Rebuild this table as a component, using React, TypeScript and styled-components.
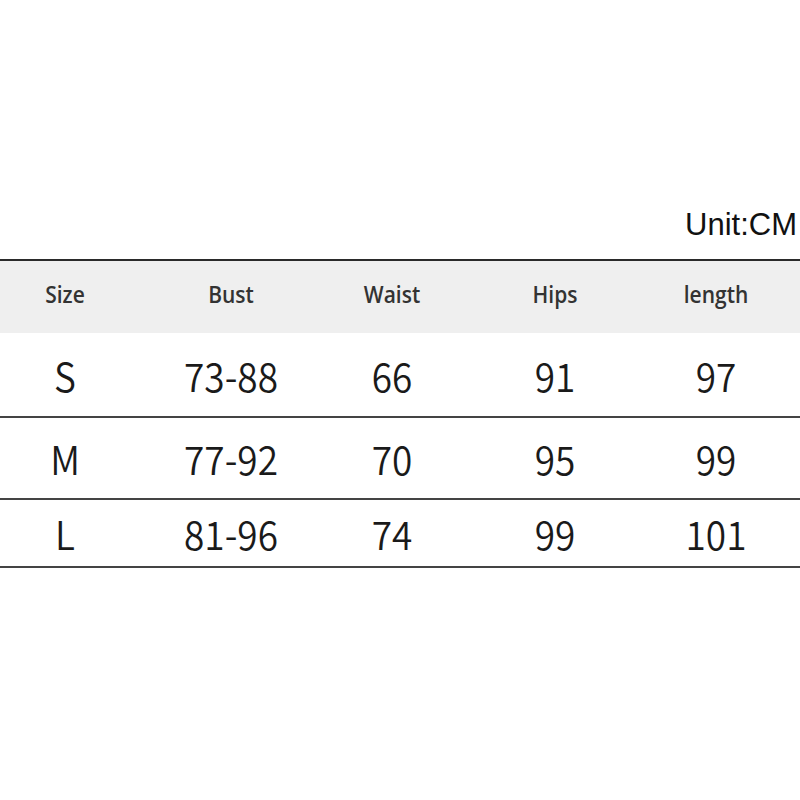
import styled, { createGlobalStyle } from 'styled-components';

type SizeRow = {
  size: string;
  bust: string;
  waist: string;
  hips: string;
  length: string;
  height: number;
};

const headers = ['Size', 'Bust', 'Waist', 'Hips', 'length'];

const rows: SizeRow[] = [
  { size: 'S', bust: '73-88', waist: '66', hips: '91', length: '97', height: 83 },
  { size: 'M', bust: '77-92', waist: '70', hips: '95', length: '99', height: 80 },
  { size: 'L', bust: '81-96', waist: '74', hips: '99', length: '101', height: 66 },
];

export default function App() {
  return (
    <>
      <GlobalStyle />
      <Page>
        <Unit>Unit:CM</Unit>
        <Table>
          <HeaderRow>
            {headers.map((h) => (
              <HeadCell key={h}>{h}</HeadCell>
            ))}
          </HeaderRow>
          {rows.map((row) => (
            <DataRow key={row.size} $height={row.height}>
              <DataCell>{row.size}</DataCell>
              <DataCell>{row.bust}</DataCell>
              <DataCell>{row.waist}</DataCell>
              <DataCell>{row.hips}</DataCell>
              <DataCell>{row.length}</DataCell>
            </DataRow>
          ))}
        </Table>
      </Page>
    </>
  );
}

const GlobalStyle = createGlobalStyle`
  body {
    margin: 0;
    background: #fff;
  }
`;

const Page = styled.div`
  width: 800px;
  height: 800px;
  padding-top: 206px;
  box-sizing: border-box;
  background: #fff;
`;

const Unit = styled.div`
  font-family: 'Liberation Sans', Arial, sans-serif;
  font-size: 31px;
  line-height: 38px;
  color: #111;
  text-align: right;
  padding-right: 3px;
  margin-bottom: 15px;
`;

const Table = styled.div`
  border-top: 2px solid #2a2a2a;
`;

const columns = '130px 202px 120px 206px 116px';

const HeaderRow = styled.div`
  display: grid;
  grid-template-columns: ${columns};
  align-items: center;
  box-sizing: border-box;
  height: 72px;
  padding-bottom: 6px;
  background: #efefef;
`;

const HeadCell = styled.div`
  font-family: 'Open Sans', 'Noto Sans', sans-serif;
  font-size: 21px;
  font-weight: 600;
  color: #333;
  text-align: center;
  transform: scaleY(1.1);
`;

const DataRow = styled.div<{ $height: number }>`
  display: grid;
  grid-template-columns: ${columns};
  align-items: center;
  height: ${(props) => props.$height}px;
  border-bottom: 2px solid #444;
`;

const DataCell = styled.div`
  font-family: 'Noto Sans CJK SC', 'Noto Sans', sans-serif;
  font-size: 37px;
  font-weight: 350;
  color: #1a1a1a;
  text-align: center;
  transform: scaleY(1.08);
`;
